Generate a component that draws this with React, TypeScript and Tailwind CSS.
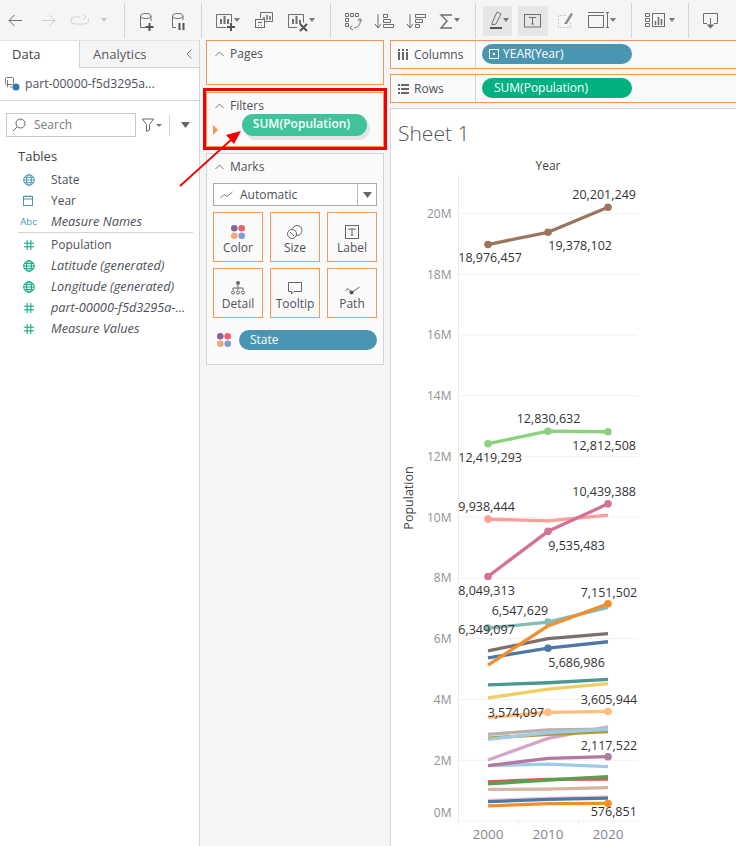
import React from 'react';

const ORANGE = 'border-[#f0975a]';

const y = (v: number) => 821 - 30.38 * v;
const XS = [488, 548, 608];

type Series = { color: string; values: number[]; dots?: number[]; w?: number };

const SERIES: Series[] = [
  { color: '#f7c6d0', values: [0.68, 0.74, 0.79] },
  { color: '#4e79a7', values: [0.635, 0.71, 0.755] },
  { color: '#f28e2b', values: [0.5, 0.57, 0.577], dots: [2] },
  { color: '#d7b5a6', values: [1.04, 1.05, 1.1] },
  { color: '#e15759', values: [1.29, 1.37, 1.38] },
  { color: '#59a14f', values: [1.22, 1.35, 1.46] },
  { color: '#a0cbe8', values: [1.82, 1.87, 1.79] },
  { color: '#b07aa1', values: [1.82, 2.06, 2.117], dots: [2] },
  { color: '#d4a6c8', values: [2.01, 2.72, 3.1] },
  { color: '#bab0ac', values: [2.85, 3.0, 3.02] },
  { color: '#b6992d', values: [2.73, 2.85, 2.94] },
  { color: '#a0cbe8', values: [2.69, 2.91, 3.02] },
  { color: '#ffbe7d', values: [3.41, 3.574, 3.606], dots: [1, 2] },
  { color: '#f1ce63', values: [4.05, 4.34, 4.52] },
  { color: '#499894', values: [4.48, 4.55, 4.66] },
  { color: '#79706e', values: [5.6, 6.0, 6.17] },
  { color: '#4e79a7', values: [5.37, 5.687, 5.9], dots: [1] },
  { color: '#86bcb6', values: [6.349, 6.548, 7.03], dots: [0, 1] },
  { color: '#f28e2b', values: [5.13, 6.42, 7.152], dots: [2] },
  { color: '#ff9d9a', values: [9.938, 9.88, 10.07], dots: [0] },
  { color: '#d37295', values: [8.049, 9.535, 10.439], dots: [0, 1, 2] },
  { color: '#8cd17d', values: [12.419, 12.831, 12.813], dots: [0, 1, 2] },
  { color: '#9c755f', values: [18.976, 19.378, 20.201], dots: [0, 1, 2] },
];

const LABELS: [string, number, number][] = [
  ['20,201,249', 572.3, 194.7],
  ['19,378,102', 548.3, 245.7],
  ['18,976,457', 458.3, 257.7],
  ['12,830,632', 516.7, 418.7],
  ['12,812,508', 572.3, 445.7],
  ['12,419,293', 458.3, 457.7],
  ['10,439,388', 572.3, 491.7],
  ['9,938,444', 458.3, 506.7],
  ['9,535,483', 548.3, 545],
  ['8,049,313', 458.3, 590],
  ['7,151,502', 580.7, 592],
  ['6,547,629', 491.7, 610],
  ['6,349,097', 458.3, 629],
  ['5,686,986', 548.3, 662],
  ['3,605,944', 580.7, 699],
  ['3,574,097', 487.7, 712.7],
  ['2,117,522', 580.7, 745],
  ['576,851', 590.7, 811.7],
];

function Caret({ x, cy = 20, color = '#777' }: { x: number; cy?: number; color?: string }) {
  return <path d={`M${x - 3} ${cy - 2}h6l-3 4z`} fill={color} stroke="none" />;
}

function Group({ start, width, children }: { start: number; width: number; children: React.ReactNode }) {
  return (
    <svg width={width} height={40} viewBox={`${start} 0 ${width} 40`} fill="none" stroke="#6e6e6e" className="shrink-0">
      {children}
    </svg>
  );
}

function Sep() {
  return <div className="w-px h-[35px] mt-[3px] bg-[#d4d4d4] shrink-0" />;
}

function Toolbar() {
  return (
    <div className="flex h-[40px] bg-[#f5f5f5]">
      <Group start={0} width={124}>
        <path d="M9 20.5H22M14.5 15L9 20.5L14.5 26" />
        <path d="M42 20.5H55M49.5 15L55 20.5L49.5 26" stroke="#cfcfcf" />
        <path d="M80 17H74.5a3.5 3.5 0 0 0 0 7H85a3.5 3.5 0 0 0 3-5.5M83 14l3 3-3 3" stroke="#cfcfcf" />
        <Caret x={104} color="#c4c4c4" />
      </Group>
      <Sep />
      <Group start={125} width={76}>
        <path d="M140.500 16v11.500h5M151 16v5" />
        <ellipse cx="145.700" cy="16" rx="5.200" ry="2.500" />
        <path d="M149.500 23v8M145.500 27h8" stroke="#555" strokeWidth="2" />
        <path d="M172.500 16v11.500h3.500M183 16v4" />
        <ellipse cx="177.700" cy="16" rx="5.200" ry="2.500" />
        <path d="M179.500 23v7M183.500 23v7" stroke="#555" strokeWidth="2" />
      </Group>
      <Sep />
      <Group start={202} width={128}>
        <path d="M226 27.500h-9.500v-13h15v8" />
        <path d="M221 24v-5M224.500 24v-8M228 24v-5" strokeWidth="2" />
        <path d="M231 23v8M227 27h8" stroke="#555" strokeWidth="2" />
        <Caret x={237} />
        <path d="M260.500 18v-5.500h12v9h-8" />
        <path d="M264 20v-3M267 20v-5M270 20v-4" strokeWidth="1.500" />
        <rect x="255.500" y="19.500" width="9" height="8" />
        <path d="M258 25.500h1M261 25.500h1M258 22.500h4" />
        <path d="M297 27.500h-8.500v-13h15v8" />
        <path d="M293 24v-5M296.500 24v-8M300 24v-4" strokeWidth="2" />
        <path d="M300 24l7 7M307 24l-7 7" stroke="#555" strokeWidth="2" />
        <Caret x={312} />
      </Group>
      <Sep />
      <Group start={331} width={144}>
        <path d="M345.500 13.500h3v3h-3zM350.500 13.500h3v3h-3zM355.500 13.500h3v3h-3zM345.500 18.500h3v3h-3zM345.500 23.500h3v3h-3z" />
        <path d="M360 19c1 4-1 8-6 9M352 25.500l-2 2.500 3 2M358 21l2-2.500 2 2.500" />
        <path d="M378 14v13M375 24l3 4 3-4" />
        <path d="M383.500 14.500h4v3h-4zM383.500 19.500h7v3h-7zM383.500 24.500h10v3h-10z" />
        <path d="M410 14v13M407 24l3 4 3-4" />
        <path d="M415.500 14.500h10v3h-10zM415.500 19.500h7v3h-7zM415.500 24.500h4v3h-4z" />
        <path d="M452 15H441l6 6-6 7h11" strokeWidth="1.400" />
        <Caret x={457} />
      </Group>
      <Sep />
      <Group start={476} width={155}>
        <rect x="483" y="6" width="29" height="30" fill="#e6e6e6" stroke="none" />
        <rect x="518" y="6" width="30" height="30" fill="#e6e6e6" stroke="none" />
        <path d="M492 23l5-11 4 2-5 10-4 1z" />
        <path d="M490 28h12" stroke="#555" strokeWidth="2" />
        <Caret x={506} />
        <rect x="524.500" y="14.500" width="16" height="12.500" />
        <path d="M529 18v-.500h7v.500M532.500 17.500v6.500M531 24h3" />
        <path d="M566 15.500h-7.500v12h12v-5" stroke="#c4c4c4" strokeDasharray="2 1.500" />
        <path d="M564 24l7-11 2 1-6 10z" fill="#8a8a8a" stroke="none" />
        <rect x="588.500" y="15.500" width="15" height="12" />
        <path d="M588 12.500h16M606 12.500h3M607.500 13v15M606 27.500h3" />
        <Caret x={613} />
      </Group>
      <Sep />
      <Group start={632} width={56}>
        <path d="M645.500 13.500h4v3h-4zM645.500 18.500h4v3h-4zM645.500 23.500h4v3h-4z" />
        <rect x="652.500" y="13.500" width="12" height="13" />
        <path d="M655.500 25v-4M658.500 25v-8M661.500 25v-6" strokeWidth="1.500" />
        <Caret x={672} />
      </Group>
      <Sep />
      <Group start={689} width={47}>
        <path d="M707 23.500h-3.500v-10h14v10H714" />
        <path d="M710.500 18v8" />
        <path d="M706.500 24.500h8l-4 4z" fill="#6e6e6e" stroke="none" />
      </Group>
    </div>
  );
}

function Globe({ color }: { color: string }) {
  return (
    <svg width="12" height="12" viewBox="0 0 12 12" fill="none" stroke={color}>
      <circle cx="6" cy="6" r="5.300" />
      <ellipse cx="6" cy="6" rx="2.500" ry="5.300" />
      <path d="M.7 6h10.600M1.500 3.300h9M1.500 8.700h9" />
    </svg>
  );
}

function Calendar() {
  return (
    <svg width="11" height="11" viewBox="0 0 11 11" fill="none" stroke="#4996b2">
      <rect x=".5" y="1.500" width="9" height="9" />
      <path d="M.5 4h9M3 0v2M7 0v2" />
    </svg>
  );
}

function Hash() {
  return (
    <svg width="10" height="10" viewBox="0 0 10 10" fill="none" stroke="#02a77a">
      <path d="M3.200 0v10M6.800 0v10M0 3.200h10M0 6.800h10" />
    </svg>
  );
}

function FieldRow({ icon, label, italic }: { icon: React.ReactNode; label: string; italic?: boolean }) {
  return (
    <div className="flex items-center h-[21px]">
      <div className="w-[21px] ml-[18px] flex justify-center shrink-0">{icon}</div>
      <span className={`ml-[12px] text-[#4e5159] whitespace-nowrap ${italic ? 'italic text-[12.75px]' : 'text-[12px]'}`}>{label}</span>
    </div>
  );
}

function DataPanel() {
  return (
    <div className="w-[200px] shrink-0 bg-white border-r border-[#d4d4d4]">
      <div className="flex h-[28px] bg-[#f5f5f5] border-t border-[#e4e4e4]">
        <div className="w-[80px] bg-white border-r border-[#d4d4d4] text-[13px] leading-[18px] text-[#3e424a] pl-[12px] pt-[4px] font-medium">Data</div>
        <div className="flex-1 border-b border-[#d4d4d4] text-[13px] leading-[18px] text-[#55585f] pl-[13px] pt-[4px] flex">
          <span>Analytics</span>
          <svg className="ml-auto mr-[7px] mt-[4px]" width="6" height="10" viewBox="0 0 6 10" fill="none" stroke="#777">
            <path d="M5.500 .5L1 5l4.500 4.500" />
          </svg>
        </div>
      </div>
      <div className="flex items-center h-[33px] border-b border-[#d4d4d4] pl-[5px]">
        <svg width="15" height="14" viewBox="0 0 15 14" fill="none" stroke="#7a7a7a">
          <rect x=".5" y=".5" width="8" height="7" rx="1" />
          <path d="M3 10H2.500v-7M5 10h2" />
          <circle cx="11" cy="10" r="3.500" fill="#2a78b8" stroke="none" />
        </svg>
        <span className="ml-[5px] text-[12.25px] text-[#4e5159] whitespace-nowrap">part-00000-f5d3295a...</span>
      </div>
      <div className="flex items-center mt-[12px] pl-[6px] h-[24px]">
        <div className="flex items-center w-[130px] h-[24px] border border-[#c8c8c8]">
          <svg className="ml-[5px]" width="14" height="14" viewBox="0 0 14 14" fill="none" stroke="#666">
            <circle cx="8.500" cy="5.500" r="4.500" />
            <path d="M5.200 8.800L1 13" />
          </svg>
          <span className="ml-[8px] text-[12px] text-[#7a7d84]">Search</span>
        </div>
        <svg className="ml-[6px]" width="21" height="14" viewBox="0 0 21 14" fill="none" stroke="#666">
          <path d="M.5 1h11L7.500 6.500V12L4.500 13.500V6.500z" />
          <path d="M14 6h6l-3 3z" fill="#777" stroke="none" />
        </svg>
        <div className="w-px h-[21px] bg-[#d4d4d4] ml-[6px]" />
        <svg className="ml-[11px]" width="9" height="6" viewBox="0 0 9 6">
          <path d="M0 0h9L4.500 6z" fill="#666" />
        </svg>
      </div>
      <div className="ml-[18px] mt-[10px] h-[18px] text-[13px] leading-[18px] font-medium text-[#3e424a]">Tables</div>
      <div className="mt-[4px]">
        <FieldRow icon={<Globe color="#4996b2" />} label="State" />
        <FieldRow icon={<Calendar />} label="Year" />
        <FieldRow icon={<span className="text-[9.5px] leading-none text-[#4996b2]">Abc</span>} label="Measure Names" italic />
      </div>
      <div className="h-px bg-[#d4d4d4] ml-[18px] mr-[6px] mb-[1px]" />
      <FieldRow icon={<Hash />} label="Population" />
      <FieldRow icon={<Globe color="#02a77a" />} label="Latitude (generated)" italic />
      <FieldRow icon={<Globe color="#02a77a" />} label="Longitude (generated)" italic />
      <FieldRow icon={<Hash />} label="part-00000-f5d3295a-..." italic />
      <FieldRow icon={<Hash />} label="Measure Values" italic />
    </div>
  );
}

function CardTitle({ label }: { label: string }) {
  return (
    <div className="flex items-center h-[16px] pl-[8px]">
      <svg width="9" height="6" viewBox="0 0 9 6" fill="none" stroke="#777">
        <path d="M.5 5L4.500 1l4 4" />
      </svg>
      <span className="ml-[6px] text-[12px] text-[#4e5159]">{label}</span>
    </div>
  );
}

function Quad() {
  return (
    <svg width="14" height="14" viewBox="0 0 14 14" className="shrink-0">
      <circle cx="3.300" cy="3.300" r="3.300" fill="#85639b" />
      <circle cx="10.700" cy="3.300" r="3.300" fill="#ee5f72" />
      <circle cx="3.300" cy="10.700" r="3.300" fill="#f3a77c" />
      <circle cx="10.700" cy="10.700" r="3.300" fill="#7d9fd0" />
    </svg>
  );
}

function MarkButton({ label, icon }: { label: string; icon: React.ReactNode }) {
  return (
    <div className={`w-[50px] h-[50px] border ${ORANGE} flex flex-col items-center`}>
      <div className="h-[27px] flex items-end justify-center pb-[1px]">{icon}</div>
      <span className="text-[12px] leading-[16px] text-[#4e5159]">{label}</span>
    </div>
  );
}

function ShelfPanel() {
  const stroke = { fill: 'none', stroke: '#666' };
  return (
    <div className="w-[190px] shrink-0 bg-[#f5f5f5] px-[6px]">
      <div className={`h-[45px] border ${ORANGE} bg-[#fafafa] pt-[5px]`}>
        <CardTitle label="Pages" />
      </div>
      <div className="mt-[3px] -mx-[3px] h-[62px] border-[3px] border-[#f40000] pt-[1px]">
        <div className={`relative h-[55px] border ${ORANGE} bg-[#fafafa] pt-[5px]`}>
          <CardTitle label="Filters" />
          <div className="ml-[35px] w-[125px] h-[22px] rounded-full bg-[#3fc39a] shadow-[3px_4px_0_#e4e4e4] text-white text-[12px] font-semibold text-center leading-[20px] pr-[6px]">
            SUM(Population)
          </div>
          <div className="absolute left-[6px] top-[32px] w-0 h-0 border-y-[5px] border-y-transparent border-l-[5px] border-l-[#f0975a]" />
        </div>
      </div>
      <div className="mt-[3px] h-[212px] border border-[#d4d4d4] bg-[#fafafa] pt-[5px]">
        <CardTitle label="Marks" />
        <div className="mx-[6px] mt-[8px] h-[23px] border border-[#aaa] bg-white flex items-center">
          <svg className="ml-[6px]" width="13" height="8" viewBox="0 0 13 8" fill="none" stroke="#777">
            <path d="M.5 7L4 3.500l3 2L12.500 1" />
          </svg>
          <span className="ml-[7px] text-[12px] text-[#4e5159]">Automatic</span>
          <div className="ml-auto w-[19px] h-full border-l border-[#bbb] flex items-center justify-center">
            <svg width="9" height="6" viewBox="0 0 9 6">
              <path d="M0 0h9L4.500 6z" fill="#666" />
            </svg>
          </div>
        </div>
        <div className="mx-[6px] mt-[6px] grid grid-cols-3 gap-x-[7px] gap-y-[6px]">
          <MarkButton label="Color" icon={<Quad />} />
          <MarkButton
            label="Size"
            icon={
              <svg width="16" height="14" viewBox="0 0 16 14" {...stroke}>
                <circle cx="10" cy="5.500" r="5" />
                <circle cx="5" cy="9" r="4.500" fill="#fafafa" />
                <path d="M3 7l4 4" />
              </svg>
            }
          />
          <MarkButton
            label="Label"
            icon={
              <svg width="14" height="14" viewBox="0 0 14 14" {...stroke}>
                <rect x=".5" y=".5" width="13" height="13" />
                <path d="M4 5V4h6v1M7 4v6M5.500 10h3" />
              </svg>
            }
          />
          <MarkButton
            label="Detail"
            icon={
              <svg width="14" height="14" viewBox="0 0 14 14" {...stroke}>
                <circle cx="7" cy="2" r="2" fill="#666" stroke="none" />
                <path d="M7 4v3M2 9V7h10v2M7 7v2" />
                <circle cx="2" cy="11.500" r="1.500" />
                <circle cx="7" cy="11.500" r="1.500" />
                <circle cx="12" cy="11.500" r="1.500" />
              </svg>
            }
          />
          <MarkButton
            label="Tooltip"
            icon={
              <svg width="14" height="13" viewBox="0 0 14 13" {...stroke}>
                <path d="M.5 .5h13v9H6L3.500 12V9.500h-3z" />
              </svg>
            }
          />
          <MarkButton
            label="Path"
            icon={
              <svg width="15" height="9" viewBox="0 0 15 9" {...stroke}>
                <path d="M.5 4.500L3 2.500L6.500 6.500M8 5.500L14.500 1" />
                <circle cx="6.500" cy="6.500" r="2" fill="#555" stroke="none" />
              </svg>
            }
          />
        </div>
        <div className="flex items-center ml-[10px] mt-[12px]">
          <Quad />
          <div className="ml-[8px] w-[138px] h-[20px] rounded-full bg-[#4996b2] text-white text-[12px] leading-[20px] pl-[11px]">State</div>
        </div>
      </div>
    </div>
  );
}

function Shelf({ label, icon, children }: { label: string; icon: React.ReactNode; children: React.ReactNode }) {
  return (
    <div className={`flex h-[29px] border-y border-l ${ORANGE} bg-[#fafafa]`}>
      <div className="w-[85px] border-r border-[#d4d4d4] flex items-center pl-[7px]">
        {icon}
        <span className="ml-[5px] text-[12px] text-[#4e5159]">{label}</span>
      </div>
      {children}
    </div>
  );
}

function Chart() {
  const ticks = [20, 18, 16, 14, 12, 10, 8, 6, 4, 2, 0];
  return (
    <svg width="345" height="696" viewBox="391 150 345 696" className="block">
      {ticks.map((t) => (
        <line key={t} x1="458" x2="638" y1={y(t)} y2={y(t)} stroke="#f0f0f0" />
      ))}
      <line x1="458.500" x2="458.500" y1="175" y2="825" stroke="#ebebeb" />
      <line x1="518.500" x2="518.500" y1="821" y2="825" stroke="#ebebeb" />
      <line x1="578.500" x2="578.500" y1="821" y2="825" stroke="#ebebeb" />
      {ticks.map((t) => (
        <text key={t} x="451.500" y={(t === 0 ? 812 : y(t)) + 4.5} textAnchor="end" fontSize="12" fill="#8d9199">
          {t}M
        </text>
      ))}
      {XS.map((x, i) => (
        <text key={x} x={x} y="839" textAnchor="middle" fontSize="13.500" fill="#7f838b">
          {2000 + i * 10}
        </text>
      ))}
      <text x="548" y="170" textAnchor="middle" fontSize="12" fill="#444">Year</text>
      <text transform="translate(413 498) rotate(-90)" textAnchor="middle" fontSize="12.500" fill="#444">Population</text>
      {SERIES.map((s, i) => (
        <g key={i}>
          <polyline
            points={s.values.map((v, j) => `${XS[j]},${y(v)}`).join(' ')}
            fill="none"
            stroke={s.color}
            strokeWidth="3.300"
            strokeLinejoin="round"
          />
          {s.dots?.map((d) => (
            <circle key={d} cx={XS[d]} cy={y(s.values[d])} r="3.800" fill={s.color} />
          ))}
        </g>
      ))}
      {LABELS.map(([t, lx, ly]) => (
        <text key={t} x={lx} y={ly + 4.5} fontSize="12.500" fill="#333">
          {t}
        </text>
      ))}
    </svg>
  );
}

function ViewPanel() {
  return (
    <div className="flex-1 bg-[#f5f5f5] min-w-0">
      <Shelf
        label="Columns"
        icon={
          <svg width="11" height="11" viewBox="0 0 11 11" fill="#666">
            <rect x="0" y="3" width="2" height="8" />
            <rect x="4" y="3" width="2" height="8" />
            <rect x="8" y="3" width="2" height="8" />
            <rect x="0" y="0" width="2" height="2" />
            <rect x="4" y="0" width="2" height="2" />
            <rect x="8" y="0" width="2" height="2" />
          </svg>
        }
      >
        <div className="ml-[6px] mt-[3px] w-[150px] h-[20px] rounded-full bg-[#4996b2] flex items-center pl-[7px] text-white text-[12px]">
          <svg width="10" height="10" viewBox="0 0 10 10" fill="none" stroke="#fff">
            <rect x=".5" y=".5" width="9" height="9" />
            <circle cx="5" cy="5" r="1.200" fill="#fff" stroke="none" />
          </svg>
          <span className="ml-[4px]">YEAR(Year)</span>
        </div>
      </Shelf>
      <div className="mt-[5px]">
        <Shelf
          label="Rows"
          icon={
            <svg width="11" height="10" viewBox="0 0 11 10" fill="#666">
              <rect x="0" y="0" width="2" height="2" />
              <rect x="3" y="0" width="8" height="2" />
              <rect x="0" y="4" width="2" height="2" />
              <rect x="3" y="4" width="8" height="2" />
              <rect x="0" y="8" width="2" height="2" />
              <rect x="3" y="8" width="8" height="2" />
            </svg>
          }
        >
          <div className="ml-[6px] mt-[3px] w-[150px] h-[20px] rounded-full bg-[#02b180] text-white text-[12px] leading-[20px] pl-[12px]">SUM(Population)</div>
        </Shelf>
      </div>
      <div className="mt-[5px] h-[738px] bg-white border-t border-l border-[#d4d4d4]">
        <div className="h-[41px] pl-[7px] pt-[11px] text-[21px] leading-[26px] font-light text-[#555]">Sheet 1</div>
        <Chart />
      </div>
    </div>
  );
}

export default function App() {
  return (
    <div className="relative w-[736px] h-[846px] overflow-hidden bg-white font-['Open_Sans',sans-serif]">
      <Toolbar />
      <div className="flex h-[806px]">
        <DataPanel />
        <ShelfPanel />
        <ViewPanel />
      </div>
      {/* red callout arrow drawn over the panels */}
      <svg className="absolute left-[175px] top-[125px] pointer-events-none" width="70" height="66" viewBox="175 125 70 66">
        <path d="M180 186L232 139" stroke="#f40000" strokeWidth="1.800" />
        <path d="M241 131L234 144L226 135z" fill="#f40000" />
      </svg>
    </div>
  );
}
